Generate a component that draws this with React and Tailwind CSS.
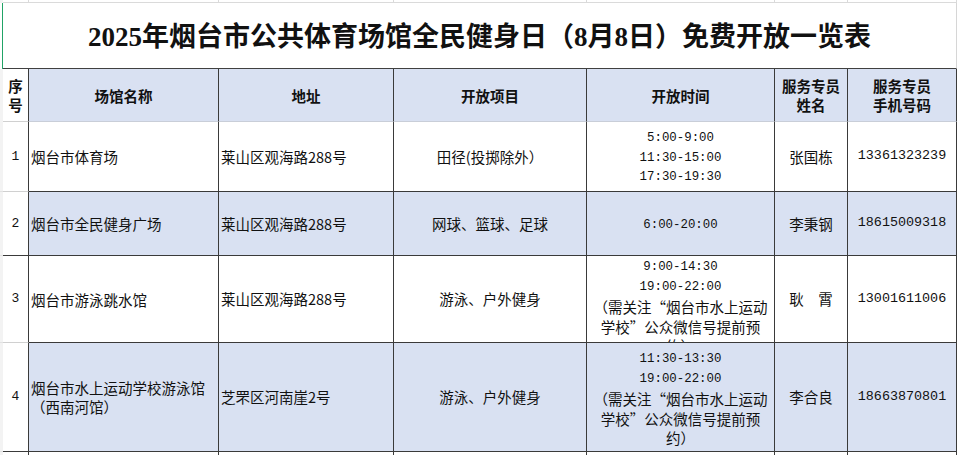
import React from "react";

const grid =
  "grid grid-cols-[3px_26px_190px_175px_193px_188px_73px_109px_3px]";
const dark = "border-[#3a3a3a]";
const mono = "font-['Liberation_Mono','Noto_Sans_CJK_SC',monospace]";

const rows = [
  {
    n: "1",
    name: ["烟台市体育场"],
    addr: "莱山区观海路288号",
    item: "田径(投掷除外）",
    time: ["5:00-9:00", "11:30-15:00", "17:30-19:30"],
    person: "张国栋",
    phone: "13361323239",
    h: "h-[70px]",
    blue: false,
    numDark: false,
  },
  {
    n: "2",
    name: ["烟台市全民健身广场"],
    addr: "莱山区观海路288号",
    item: "网球、篮球、足球",
    time: ["6:00-20:00"],
    person: "李秉钢",
    phone: "18615009318",
    h: "h-[64px]",
    blue: true,
    numDark: true,
  },
  {
    n: "3",
    name: ["烟台市游泳跳水馆"],
    addr: "莱山区观海路288号",
    item: "游泳、户外健身",
    time: [
      "9:00-14:30",
      "19:00-22:00",
      "（需关注“烟台市水上运动",
      "学校”公众微信号提前预",
      "约）",
    ],
    person: "耿　霄",
    phone: "13001611006",
    h: "h-[87px]",
    blue: false,
    numDark: false,
    clip: true,
  },
  {
    n: "4",
    name: ["烟台市水上运动学校游泳馆", "（西南河馆）"],
    addr: "芝罘区河南崖2号",
    item: "游泳、户外健身",
    time: [
      "11:30-13:30",
      "19:00-22:00",
      "（需关注“烟台市水上运动",
      "学校”公众微信号提前预",
      "约）",
    ],
    person: "李合良",
    phone: "18663870801",
    h: "h-[109px]",
    blue: true,
    numDark: true,
  },
];

function TimeLines({ lines, clip }) {
  return (
    <div
      className={`flex flex-col items-center leading-[19.5px] ${
        clip ? "self-start pt-[2px]" : "pt-[4px]"
      }`}
    >
      {lines.map((t) =>
        /^[\d:-]+$/.test(t) ? (
          <div key={t} className={`${mono} text-[12.4px] whitespace-nowrap`}>
            {t}
          </div>
        ) : (
          <div key={t} className="whitespace-nowrap">
            {t}
          </div>
        )
      )}
    </div>
  );
}

export default function App() {
  return (
    <div className="w-[960px] h-[455px] overflow-hidden bg-white text-[#111] font-['Noto_Sans_CJK_SC',sans-serif] text-[14.5px]">
      {/* strip of the row above */}
      <div className={`${grid} h-[3px]`}>
        <div className="bg-[#f3f3f3]"></div>
        <div className="border-r border-b border-[#dadada]"></div>
        <div className="border-r border-b border-[#dadada]"></div>
        <div className="border-r border-b border-[#dadada]"></div>
        <div className="border-r border-b border-[#dadada]"></div>
        <div className="border-r border-b border-[#dadada]"></div>
        <div className="border-r border-b border-[#dadada]"></div>
        <div className="border-r border-b border-[#dadada]"></div>
        <div></div>
      </div>

      {/* title */}
      <div className={`${grid} h-[66px]`}>
        <div className="border-r-[1px] border-[#21a366]"></div>
        <div
          className={`col-span-7 flex items-center justify-center pt-[4px] border-b border-r border-b-[#404040] border-r-[#d6d6d6] font-['Liberation_Serif','Noto_Sans_CJK_SC',serif] font-bold text-[27px] whitespace-nowrap`}
        >
          2025年烟台市公共体育场馆全民健身日（8月8日）免费开放一览表
        </div>
        <div></div>
      </div>

      {/* header */}
      <div className={`${grid} h-[53px] font-bold leading-[19px]`}>
        <div className="bg-[#f3f3f3]"></div>
        <div
          className={`flex items-center justify-center text-center border-r ${dark} border-b border-b-[#d0d0d0]`}
        >
          <span className="w-[16px]">序号</span>
        </div>
        {["场馆名称", "地址", "开放项目", "开放时间"].map((t) => (
          <div
            key={t}
            className={`flex items-center justify-center bg-[#d9e1f2] border-r ${dark} border-b border-b-[#c9ced8]`}
          >
            {t}
          </div>
        ))}
        <div
          className={`flex flex-col items-center justify-center bg-[#d9e1f2] border-r ${dark} border-b border-b-[#c9ced8]`}
        >
          <span>服务专员</span>
          <span>姓名</span>
        </div>
        <div
          className={`flex flex-col items-center justify-center bg-[#d9e1f2] border-r ${dark} border-b border-b-[#c9ced8]`}
        >
          <span>服务专员</span>
          <span>手机号码</span>
        </div>
        <div></div>
      </div>

      {/* data rows */}
      {rows.map((r) => {
        const bg = r.blue ? "bg-[#d9e1f2]" : "bg-white";
        const cell = `${bg} border-r border-b ${dark} overflow-hidden`;
        return (
          <div key={r.n} className={`${grid} ${r.h}`}>
            <div className="bg-[#f3f3f3] border-b border-[#e2e2e2]"></div>
            <div
              className={`flex items-center justify-center bg-white border-r ${dark} border-b ${
                r.numDark ? "border-b-[#3a3a3a]" : "border-b-[#d0d0d0]"
              } ${mono} text-[13px]`}
            >
              {r.n}
            </div>
            <div
              className={`${cell} flex flex-col justify-center pl-[2px] leading-[19px] whitespace-nowrap`}
            >
              {r.name.map((t) => (
                <div key={t}>{t}</div>
              ))}
            </div>
            <div className={`${cell} flex items-center pl-[2px] whitespace-nowrap`}>
              {r.addr}
            </div>
            <div className={`${cell} flex items-center justify-center whitespace-nowrap`}>
              {r.item}
            </div>
            <div className={`${cell} flex items-center justify-center`}>
              <TimeLines lines={r.time} clip={r.clip} />
            </div>
            <div className={`${cell} flex items-center justify-center whitespace-pre`}>
              {r.person}
            </div>
            <div
              className={`${cell} flex items-center justify-center ${mono} text-[13.4px]`}
            >
              {r.phone}
            </div>
            <div></div>
          </div>
        );
      })}

      {/* start of the next row */}
      <div className={`${grid} h-[3px]`}>
        <div className="bg-[#f3f3f3]"></div>
        <div className={`border-r ${dark}`}></div>
        <div className={`border-r ${dark}`}></div>
        <div className={`border-r ${dark}`}></div>
        <div className={`border-r ${dark}`}></div>
        <div className={`border-r ${dark}`}></div>
        <div className={`border-r ${dark}`}></div>
        <div className={`border-r ${dark}`}></div>
        <div></div>
      </div>
    </div>
  );
}
